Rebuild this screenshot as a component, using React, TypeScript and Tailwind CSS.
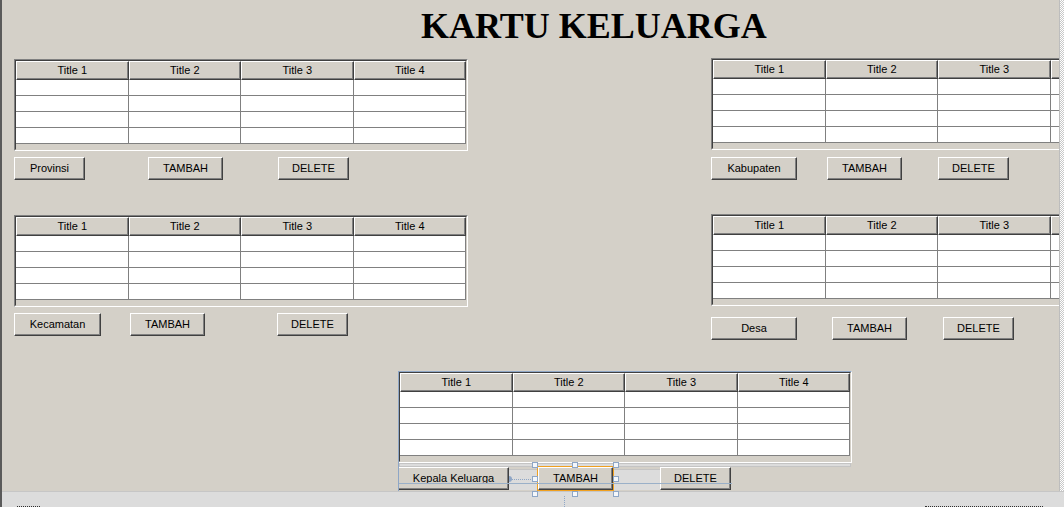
import React from "react";

const titles = ["Title 1", "Title 2", "Title 3", "Title 4"];
const rows = [0, 1, 2, 3];

function Table({ selected = false }: { selected?: boolean }) {
  const outer = selected
    ? "border-t-[#8ea6c6] border-l-[#8ea6c6]"
    : "border-t-[#808080] border-l-[#808080]";
  return (
    <div className={`w-[454px] shrink-0 border border-b-white border-r-white ${outer}`}>
      <div className="border border-t-[#404040] border-l-[#404040] border-b-[#d4d0c8] border-r-[#d4d0c8] bg-[#d4d0c8]">
        <div className="grid grid-cols-4">
          {titles.map(t => (
            <div
              key={t}
              className="h-[19px] flex items-center justify-center border border-t-white border-l-white border-r-[#404040] border-b-[#404040] shadow-[inset_-1px_-1px_0_#808080] text-black"
            >
              {t}
            </div>
          ))}
        </div>
        {rows.map(r => (
          <div key={r} className="grid grid-cols-4">
            {titles.map(t => (
              <div key={t} className="h-[16px] bg-white border-r border-b border-r-[#808080] border-b-[#808080]" />
            ))}
          </div>
        ))}
        <div className="h-[5px]" />
      </div>
    </div>
  );
}

function Btn({ label, className = "" }: { label: string; className?: string }) {
  return (
    <button
      className={`h-[23px] shrink-0 flex items-center justify-center bg-[#d4d0c8] border border-t-white border-l-white border-r-[#404040] border-b-[#404040] shadow-[inset_-1px_-1px_0_#808080] text-[11px] leading-none text-black ${className}`}
    >
      {label}
    </button>
  );
}

function Handle({ className }: { className: string }) {
  return <div className={`absolute z-20 w-[6px] h-[6px] bg-[#f4f7fb] border border-[#8ea6c6] ${className}`} />;
}

export default function App() {
  return (
    <div className="w-[1064px] h-[507px] flex flex-col bg-[#d4d0c8] font-['Liberation_Sans',Arial,sans-serif] text-[11px] overflow-hidden">
      <div className="flex h-[491px] shrink-0">
        <div className="w-[2px] shrink-0 bg-[#5a5a5a]" />

        <main className="flex-1 min-w-0 flex flex-col">
          {/* judul */}
          <h1 className="ml-[419px] mt-[8px] h-[36px] leading-[36px] font-['Liberation_Serif','Times_New_Roman',serif] font-bold text-[36px] text-black whitespace-nowrap">
            KARTU KELUARGA
          </h1>

          {/* tabel atas: provinsi / kabupaten, kecamatan / desa */}
          <div className="mt-[14px] flex items-start overflow-hidden">
            <div className="ml-[12px] mt-px w-[454px] shrink-0 flex flex-col">
              <Table />
              <div className="mt-[6px] flex">
                <Btn label="Provinsi" className="w-[71px]" />
                <Btn label="TAMBAH" className="ml-[63px] w-[75px]" />
                <Btn label="DELETE" className="ml-[55px] w-[71px]" />
              </div>
              <div className="mt-[35px]">
                <Table />
              </div>
              <div className="mt-[6px] flex">
                <Btn label="Kecamatan" className="w-[87px]" />
                <Btn label="TAMBAH" className="ml-[29px] w-[75px]" />
                <Btn label="DELETE" className="ml-[72px] w-[71px]" />
              </div>
            </div>

            <div className="ml-[243px] w-[454px] shrink-0 flex flex-col">
              <Table />
              <div className="mt-[7px] flex">
                <Btn label="Kabupaten" className="w-[86px]" />
                <Btn label="TAMBAH" className="ml-[30px] w-[75px]" />
                <Btn label="DELETE" className="ml-[36px] w-[71px]" />
              </div>
              <div className="mt-[34px]">
                <Table />
              </div>
              <div className="mt-[11px] flex">
                <Btn label="Desa" className="w-[86px]" />
                <Btn label="TAMBAH" className="ml-[35px] w-[75px]" />
                <Btn label="DELETE" className="ml-[36px] w-[71px]" />
              </div>
            </div>
          </div>

          {/* kepala keluarga (sedang dipilih di designer) */}
          <div className="relative ml-[396px] mt-[31px] w-[454px] flex flex-col">
            <Table selected />
            <div className="h-[4px] mx-px bg-[#dcdcdc] border border-[#c4c4c4]" />
            <div className="relative flex h-[23px]">
              <div className="absolute left-[110px] top-[2px] w-[152px] h-[21px] bg-[#dcdcdc] border-t border-t-[#c4c4c4]" />
              <Btn label="Kepala Keluarga" className="relative z-10 w-[111px]" />
              <Btn label="TAMBAH" className="relative z-10 ml-[29px] w-[75px] outline outline-1 outline-[#f0a020]" />
              <Btn label="DELETE" className="relative z-10 ml-[47px] w-[71px]" />

              {/* garis bantu */}
              <div className="absolute z-20 left-0 top-[16px] w-[334px] h-px bg-[#9ab0c8]" />
              <div className="absolute z-20 left-[112px] top-[12px] w-[23px] border-t border-dotted border-t-[#8ea6c6]" />
              <div className="absolute z-20 left-[111px] top-[9px] w-[3px] h-[6px] rounded-r-full bg-[#8ea6c6]" />
              <div className="absolute z-20 left-[166px] top-[29px] h-[13px] border-l border-dotted border-l-[#8ea6c6]" />

              <Handle className="left-[134px] -top-[5px]" />
              <Handle className="left-[174px] -top-[5px]" />
              <Handle className="left-[215px] -top-[5px]" />
              <Handle className="left-[134px] top-[9px]" />
              <Handle className="left-[215px] top-[9px]" />
              <Handle className="left-[134px] top-[24px]" />
              <Handle className="left-[174px] top-[24px]" />
              <Handle className="left-[215px] top-[24px]" />
            </div>
            <div className="absolute z-20 left-0 top-0 h-[120px] w-px bg-[#8ea6c6]" />
          </div>
        </main>

        <div className="w-[5px] shrink-0 border-l border-l-[#bdbdbd] bg-[image:repeating-conic-gradient(#c8c8c8_0%_25%,#ffffff_0%_50%)] bg-[length:2px_2px]" />
      </div>

      {/* strip bawah */}
      <div className="flex h-[16px] shrink-0">
        <div className="w-[2px] shrink-0 bg-[#5a5a5a]" />
        <div className="flex-1 flex items-end bg-[#dcdcdc] border-t border-t-[#c6c6c6]">
          <div className="ml-[15px] w-[23px] border-t border-dotted border-t-[#303030]" />
          <div className="ml-[885px] w-[118px] border-t border-dotted border-t-[#303030]" />
        </div>
      </div>
    </div>
  );
}
